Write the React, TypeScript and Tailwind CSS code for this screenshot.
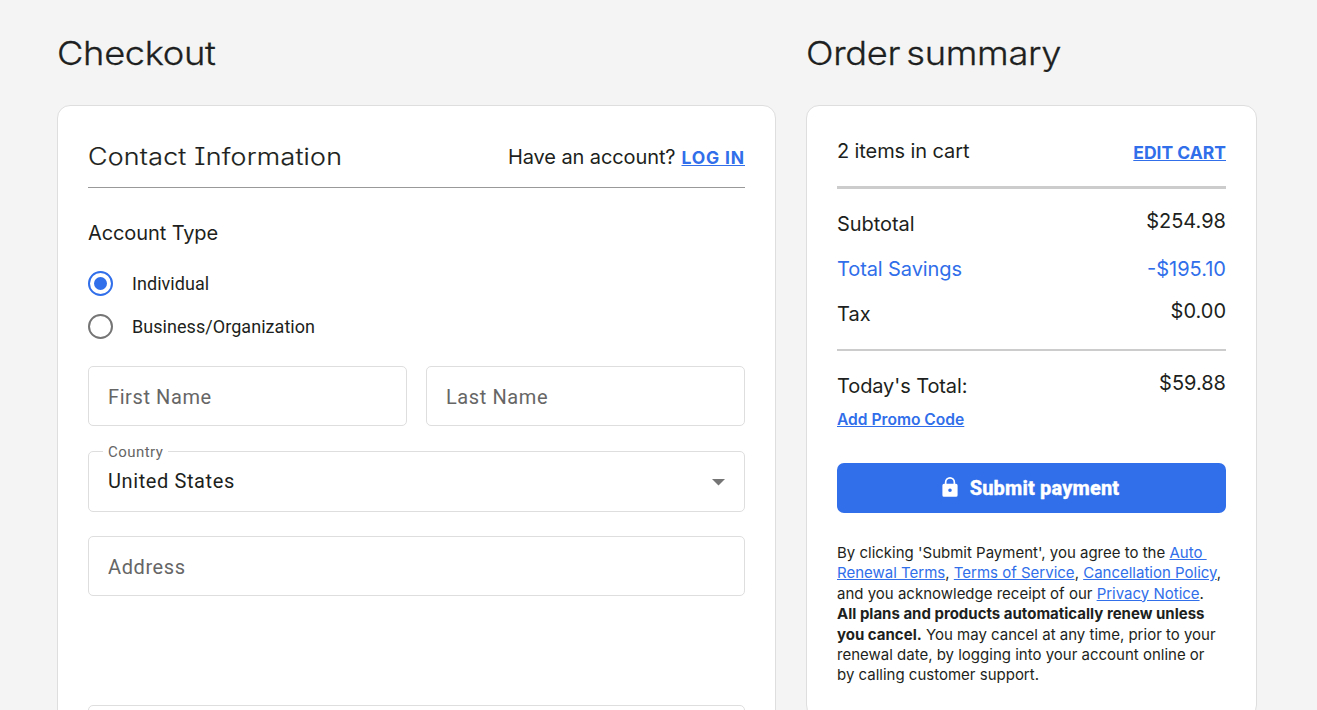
import { useState } from "react";

const accountTypes = ["Individual", "Business/Organization"];

const legalLink = "text-[#306eea] underline";

function TextField({ label }: { label: string }) {
  return (
    <input
      placeholder={label}
      className="h-[60px] w-full min-w-0 rounded-[5px] border border-[#dedede] bg-white px-[19px] pt-0.5 font-['Roboto',sans-serif] text-xl tracking-[0.6px] text-[#1d1f20] outline-none placeholder:text-[#666]"
    />
  );
}

function PageTitle({ children }: { children: string }) {
  return (
    <h1 className="h-[105px] origin-left scale-x-[1.1] pt-[30px] text-[33px] leading-[46px] font-light tracking-[-0.3px] [word-spacing:-3.5px] [-webkit-text-stroke:0.3px_#1d1f20]">
      {children}
    </h1>
  );
}

function ContactCard() {
  const [accountType, setAccountType] = useState(accountTypes[0]);

  return (
    <div className="h-[700px] rounded-t-[13px] border border-[#dedede] bg-white px-[30px]">
      <div className="flex h-[82px] items-center justify-between border-b border-[#999] pt-[21px]">
        <h2 className="origin-left scale-x-[1.14] text-[23.5px] leading-[30px] font-light tracking-[0.2px] whitespace-nowrap [-webkit-text-stroke:0.2px_#1d1f20] [font-feature-settings:'cv08']">
          Contact Information
        </h2>
        <p className="flex items-center gap-1.5 text-xl tracking-[-0.1px] whitespace-nowrap">
          Have an account?
          <a className="pt-0.5 text-[17.5px] font-bold tracking-[0.85px] text-[#306eea] underline">LOG IN</a>
        </p>
      </div>

      <h3 className="mt-[31px] text-xl leading-7 tracking-[-0.1px]">Account Type</h3>

      <div className="mt-6 flex flex-col gap-[18px]">
        {accountTypes.map((type) => (
          <button
            key={type}
            onClick={() => setAccountType(type)}
            className="flex h-[25px] items-center gap-[19px] text-left font-['Roboto',sans-serif] text-lg tracking-[0.05px]"
          >
            {accountType === type ? (
              <span className="flex size-[25px] items-center justify-center rounded-full border-2 border-[#306eea]">
                <span className="size-[13px] rounded-full bg-[#306eea]" />
              </span>
            ) : (
              <span className="size-[25px] rounded-full border-2 border-[#757575]" />
            )}
            {type}
          </button>
        ))}
      </div>

      <div className="mt-[27px] grid grid-cols-2 gap-[19px]">
        <TextField label="First Name" />
        <TextField label="Last Name" />
      </div>

      {/* Country select with the label sitting on its border */}
      <div className="relative mt-[25px] flex h-[61px] items-center justify-between rounded-[5px] border border-[#dedede] pr-[19px] pb-0.5 pl-[19px] font-['Roboto',sans-serif]">
        <span className="absolute -top-2.5 left-3.5 bg-white px-[5px] text-[15px] leading-5 tracking-[0.45px] text-[#666]">Country</span>
        <span className="text-xl tracking-[0.6px]">United States</span>
        <svg width="13" height="7" viewBox="0 0 13 7" fill="#757575" className="mt-[3px]">
          <path d="M0 0h13L6.5 6.5z" />
        </svg>
      </div>

      <div className="mt-6">
        <TextField label="Address" />
      </div>
      <div className="mt-[109px]">
        <TextField label="" />
      </div>
    </div>
  );
}

function SummaryCard() {
  return (
    <div className="h-[613px] rounded-[13px] border border-[#dedede] bg-white px-[30px]">
      <div className="flex h-[83px] justify-between border-b-3 border-[#ccc] pt-[31px]">
        <span className="text-xl leading-7 tracking-[-0.1px]">2 items in cart</span>
        <a className="pt-0.5 text-[17.5px] leading-7 font-bold text-[#306eea] underline">EDIT CART</a>
      </div>

      <div className="h-[162px] border-b-2 border-[#ccc] pt-[21px] text-xl leading-7">
        <div className="flex h-[45px] justify-between">
          <span className="tracking-[-0.05px]">Subtotal</span>
          <span className="-mt-[3px]">$254.98</span>
        </div>
        <div className="flex h-[45px] justify-between text-[#306eea]">
          <span className="tracking-[-0.1px]">Total Savings</span>
          <span>-$195.10</span>
        </div>
        <div className="flex justify-between">
          <span>Tax</span>
          <span className="-mt-[3px]">$0.00</span>
        </div>
      </div>

      <div className="flex justify-between pt-[21px] text-xl leading-7">
        <span className="tracking-[-0.1px]">Today's Total:</span>
        <span className="-mt-[3px]">$59.88</span>
      </div>
      <a className="mt-2 block text-[15.6px] leading-6 font-semibold text-[#306eea] underline">Add Promo Code</a>

      <button className="mt-[31px] flex h-[50px] w-full items-center justify-center gap-3 rounded-[7px] bg-[#306eea] pr-0.5 font-['Roboto',sans-serif] text-xl font-extrabold tracking-[0.15px] text-white [-webkit-text-stroke:0.3px_#fff]">
        <svg width="16" height="20" viewBox="0 0 16 20" fill="#fff" fillRule="evenodd" className="-mt-0.5">
          <path d="M2 6.8h.8V5.2a5.2 5.2 0 0 1 10.4 0v1.6h.8a1.6 1.6 0 0 1 1.6 1.6v9.8a1.6 1.6 0 0 1-1.6 1.6H2A1.6 1.6 0 0 1 .4 18.200V8.400A1.600 1.600 0 0 1 2 6.800zm2.500 0h7V5.200a3.500 3.500 0 0 0-7 0zm3.500 4.600a1.800 1.800 0 1 0 0 3.600 1.800 1.800 0 0 0 0-3.600z" />
        </svg>
        Submit payment
      </button>

      <p className="mt-[30px] text-[15px] leading-[20.4px] whitespace-nowrap">
        By clicking 'Submit Payment', you agree to the <a className={legalLink}>Auto&nbsp;</a>
        <br />
        <a className={legalLink}>Renewal Terms</a>, <a className={legalLink}>Terms of Service</a>,{" "}
        <a className={legalLink}>Cancellation Policy</a>,
        <br />
        and you acknowledge receipt of our <a className={legalLink}>Privacy Notice</a>.
        <br />
        <strong className="font-bold">
          All plans and products automatically renew unless
          <br />
          you cancel.
        </strong>{" "}
        You may cancel at any time, prior to your
        <br />
        renewal date, by logging into your account online or
        <br />
        by calling customer support.
      </p>
    </div>
  );
}

export default function App() {
  return (
    <div className="flex h-screen gap-[30px] overflow-hidden bg-[#f4f4f4] pl-[57px] font-['Inter',sans-serif] text-[#1d1f20]">
      <section className="w-[719px] shrink-0">
        <PageTitle>Checkout</PageTitle>
        <ContactCard />
      </section>
      <section className="w-[451px] shrink-0">
        <PageTitle>Order summary</PageTitle>
        <SummaryCard />
      </section>
    </div>
  );
}
